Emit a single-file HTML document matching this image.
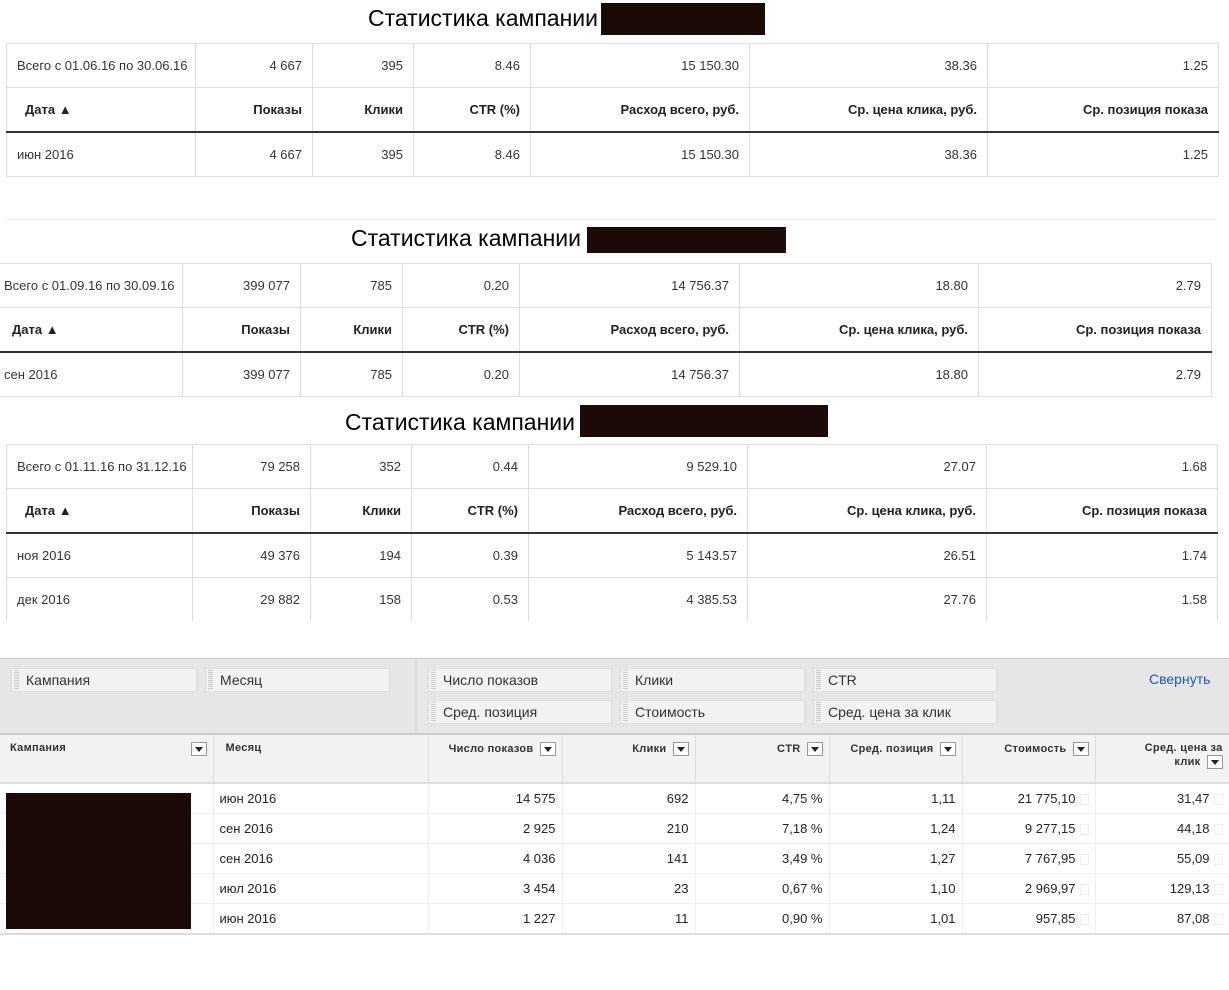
<!DOCTYPE html><html><head><meta charset="utf-8"><style>
body{margin:0;width:1229px;height:990px;background:#fff;position:relative;font-family:"Liberation Sans",Arial,sans-serif;overflow:hidden}
.t{position:absolute;font-size:23px;color:#000;white-space:nowrap}
.bk{position:absolute;background:#1b0a05}
table.s{position:absolute;border-collapse:collapse;table-layout:fixed;font-size:13px;color:#333}
table.s td{border:1px solid #ddd;height:43px;padding:0 10px;text-align:right;white-space:nowrap;overflow:hidden}
table.s td:first-child{text-align:left}
table.s tr.h td{font-weight:bold;color:#222;border-bottom:2px solid #333}
table.s tr.h td:first-child{padding-left:18px}
.pan{position:absolute;left:0;top:658px;width:1229px;height:76px;background:#e6e6e6;border-top:1px solid #ccc}
.pill{position:absolute;height:24px;background:#f2f2f2;border:1px solid #ddd;font-size:14px;color:#333;line-height:22px;padding-left:14px;box-sizing:border-box}
.pill:before{content:"";position:absolute;left:2px;top:1px;width:5px;height:20px;background:repeating-linear-gradient(#ccc 0 1px,#f2f2f2 1px 2px)}
table.g{position:absolute;left:0;top:733px;border-collapse:collapse;table-layout:fixed;font-size:13px;color:#222;width:1229px}
table.g th{background:#f2f2f2;height:40px;vertical-align:top;padding:7px 6px 0;font-size:11px;font-weight:bold;color:#333;border-right:1px solid #ddd;border-top:2px solid #ccc;border-bottom:2px solid #ddd;text-align:right;letter-spacing:.3px}
table.g td{height:29px;border-right:1px solid #eee;border-bottom:1px solid #eee;text-align:right;padding:0 6px}
.dd{display:inline-block;width:14px;height:12px;border:1px solid #999;background:#fff;vertical-align:middle;margin-left:6px;position:relative}
.dd:after{content:"";position:absolute;left:3px;top:4px;border:4px solid transparent;border-top:5px solid #222;border-bottom:0}
.sq{display:inline-block;width:7px;height:9px;border:1px solid #eee;margin-left:4px;vertical-align:middle}
</style></head><body>
<div class="t" style="left:368px;top:5px">Статистика кампании</div><div class="bk" style="left:601px;top:3px;width:164px;height:32px"></div>
<table class="s" style="left:6px;top:43px;width:1213px"><colgroup><col style="width:189px"><col style="width:117px"><col style="width:101px"><col style="width:117px"><col style="width:219px"><col style="width:238px"><col style="width:231px"></colgroup>
<tr><td>Всего с 01.06.16 по 30.06.16</td><td>4 667</td><td>395</td><td>8.46</td><td>15 150.30</td><td>38.36</td><td>1.25</td></tr>
<tr class="h"><td>Дата ▲</td><td>Показы</td><td>Клики</td><td>CTR (%)</td><td>Расход всего, руб.</td><td>Ср. цена клика, руб.</td><td>Ср. позиция показа</td></tr>
<tr><td>июн 2016</td><td>4 667</td><td>395</td><td>8.46</td><td>15 150.30</td><td>38.36</td><td>1.25</td></tr></table>
<div style="position:absolute;left:5px;top:219px;width:1211px;height:1px;background:#eee"></div>
<div class="t" style="left:351px;top:225px">Статистика кампании</div><div class="bk" style="left:587px;top:227px;width:199px;height:26px"></div>
<table class="s" style="left:-1px;top:263px;width:1212px"><colgroup><col style="width:183px"><col style="width:118px"><col style="width:102px"><col style="width:117px"><col style="width:220px"><col style="width:239px"><col style="width:233px"></colgroup>
<tr><td style="padding-left:4px">Всего с 01.09.16 по 30.09.16</td><td>399 077</td><td>785</td><td>0.20</td><td>14 756.37</td><td>18.80</td><td>2.79</td></tr>
<tr class="h"><td style="padding-left:12px">Дата ▲</td><td>Показы</td><td>Клики</td><td>CTR (%)</td><td>Расход всего, руб.</td><td>Ср. цена клика, руб.</td><td>Ср. позиция показа</td></tr>
<tr><td style="padding-left:4px">сен 2016</td><td>399 077</td><td>785</td><td>0.20</td><td>14 756.37</td><td>18.80</td><td>2.79</td></tr></table>
<div class="t" style="left:345px;top:409px">Статистика кампании</div><div class="bk" style="left:580px;top:405px;width:248px;height:32px"></div>
<table class="s" style="left:6px;top:444px;width:1211px"><colgroup><col style="width:186px"><col style="width:118px"><col style="width:101px"><col style="width:117px"><col style="width:219px"><col style="width:239px"><col style="width:231px"></colgroup>
<tr><td>Всего с 01.11.16 по 31.12.16</td><td>79 258</td><td>352</td><td>0.44</td><td>9 529.10</td><td>27.07</td><td>1.68</td></tr>
<tr class="h"><td>Дата ▲</td><td>Показы</td><td>Клики</td><td>CTR (%)</td><td>Расход всего, руб.</td><td>Ср. цена клика, руб.</td><td>Ср. позиция показа</td></tr>
<tr><td>ноя 2016</td><td>49 376</td><td>194</td><td>0.39</td><td>5 143.57</td><td>26.51</td><td>1.74</td></tr>
<tr><td style="border-bottom:0">дек 2016</td><td style="border-bottom:0">29 882</td><td style="border-bottom:0">158</td><td style="border-bottom:0">0.53</td><td style="border-bottom:0">4 385.53</td><td style="border-bottom:0">27.76</td><td style="border-bottom:0">1.58</td></tr></table>
<div class="pan"></div>
<div style="position:absolute;left:415px;top:659px;width:2px;height:75px;background:#d8d8d8"></div>
<div class="pill" style="left:11px;top:668px;width:186px">Кампания</div>
<div class="pill" style="left:205px;top:668px;width:185px">Месяц</div>
<div class="pill" style="left:428px;top:668px;width:184px">Число показов</div>
<div class="pill" style="left:620px;top:668px;width:185px">Клики</div>
<div class="pill" style="left:813px;top:668px;width:184px">CTR</div>
<div class="pill" style="left:428px;top:700px;width:184px">Сред. позиция</div>
<div class="pill" style="left:620px;top:700px;width:185px">Стоимость</div>
<div class="pill" style="left:813px;top:700px;width:184px">Сред. цена за клик</div>
<div style="position:absolute;left:1149px;top:671px;font-size:14px;color:#2255cc">Свернуть</div>
<table class="g"><colgroup><col style="width:213px"><col style="width:215px"><col style="width:134px"><col style="width:133px"><col style="width:134px"><col style="width:133px"><col style="width:133px"><col style="width:134px"></colgroup>
<tr><th style="text-align:left;padding-left:10px">Кампания<span class="dd" style="float:right"></span></th><th style="text-align:left;padding-left:12px">Месяц</th><th>Число показов<span class="dd"></span></th><th>Клики<span class="dd"></span></th><th>CTR<span class="dd"></span></th><th>Сред. позиция<span class="dd"></span></th><th>Стоимость<span class="dd"></span></th><th style="line-height:13px">Сред. цена за<br>клик<span class="dd"></span></th></tr>
<tr><td></td><td style="text-align:left">июн 2016</td><td>14 575</td><td>692</td><td>4,75 %</td><td>1,11</td><td>21 775,10<span class="sq"></span></td><td>31,47<span class="sq"></span></td></tr>
<tr><td></td><td style="text-align:left">сен 2016</td><td>2 925</td><td>210</td><td>7,18 %</td><td>1,24</td><td>9 277,15<span class="sq"></span></td><td>44,18<span class="sq"></span></td></tr>
<tr><td></td><td style="text-align:left">сен 2016</td><td>4 036</td><td>141</td><td>3,49 %</td><td>1,27</td><td>7 767,95<span class="sq"></span></td><td>55,09<span class="sq"></span></td></tr>
<tr><td></td><td style="text-align:left">июл 2016</td><td>3 454</td><td>23</td><td>0,67 %</td><td>1,10</td><td>2 969,97<span class="sq"></span></td><td>129,13<span class="sq"></span></td></tr>
<tr><td style="border-bottom:2px solid #ddd"></td><td style="text-align:left;border-bottom:2px solid #ddd">июн 2016</td><td style="border-bottom:2px solid #ddd">1 227</td><td style="border-bottom:2px solid #ddd">11</td><td style="border-bottom:2px solid #ddd">0,90 %</td><td style="border-bottom:2px solid #ddd">1,01</td><td style="border-bottom:2px solid #ddd">957,85<span class="sq"></span></td><td style="border-bottom:2px solid #ddd">87,08<span class="sq"></span></td></tr>
</table>
<div class="bk" style="left:6px;top:793px;width:185px;height:136px"></div>
</body></html>
